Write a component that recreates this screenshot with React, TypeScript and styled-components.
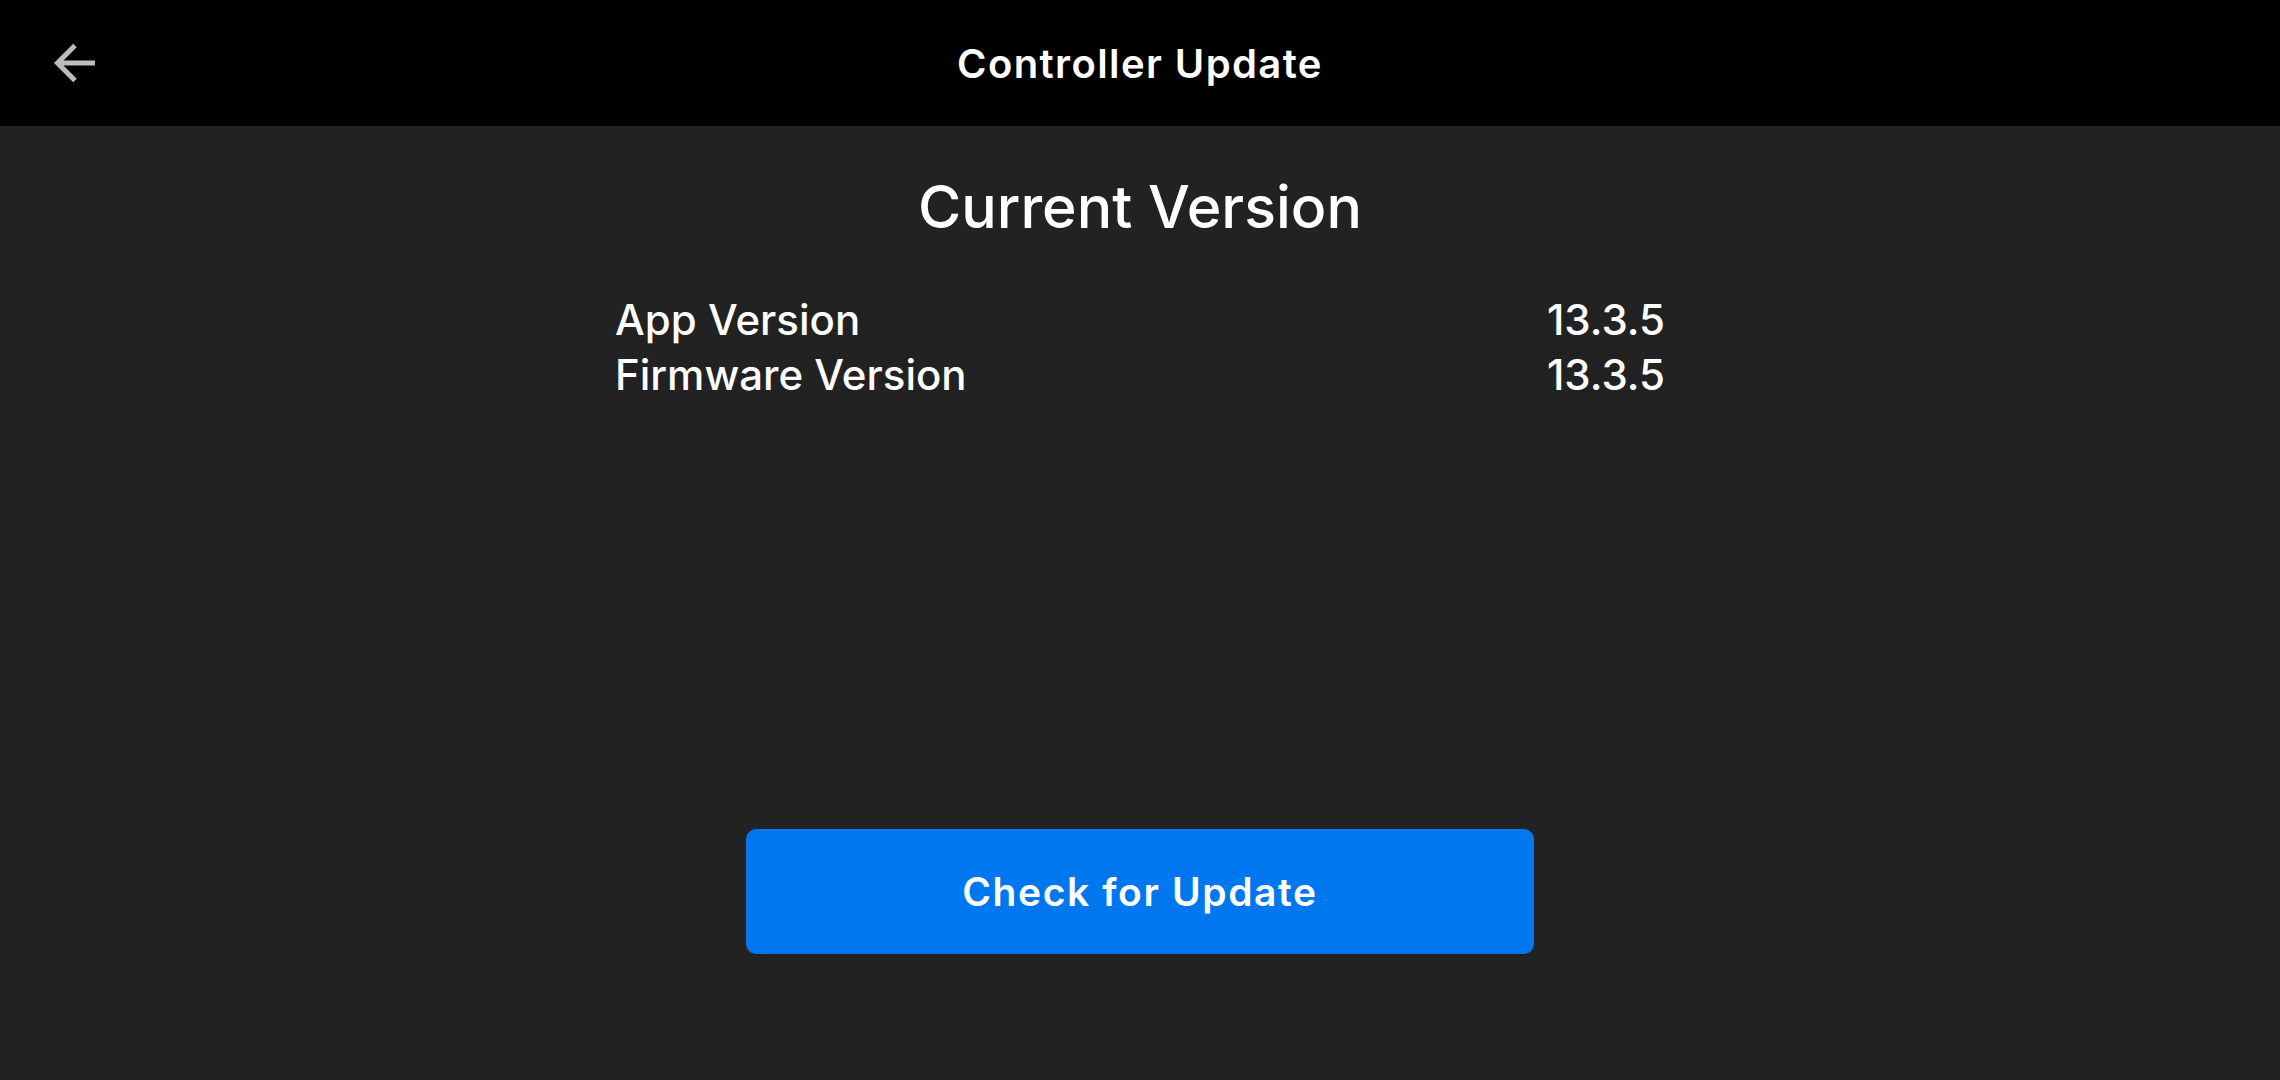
import React from "react";
import styled, { createGlobalStyle } from "styled-components";

const GlobalStyle = createGlobalStyle`
  html, body {
    margin: 0;
    padding: 0;
    background-color: #222222;
  }

  body {
    font-family: Inter, "Noto Sans", sans-serif;
    color: #ffffff;
  }
`;

const Screen = styled.div`
  display: flex;
  flex-flow: column nowrap;
  width: 100%;
  height: 100vh;
  background-color: #222222;
`;

const Header = styled.header`
  position: relative;
  display: flex;
  align-items: center;
  justify-content: center;
  height: 126px;
  flex-shrink: 0;
  background-color: #000000;
`;

const BackButton = styled.button`
  position: absolute;
  left: 44px;
  top: 50%;
  transform: translateY(-50%);
  display: flex;
  align-items: center;
  justify-content: center;
  width: 60px;
  height: 60px;
  padding: 0;
  border: none;
  background: none;
  cursor: pointer;
`;

const Title = styled.h1`
  margin: 0;
  font-size: 40px;
  font-weight: 600;
  letter-spacing: 1.4px;
`;

const Main = styled.main`
  display: flex;
  flex-flow: column nowrap;
  align-items: center;
  flex: 1;
  padding: 45px 0 126px;
`;

const Heading = styled.h2`
  margin: 0 0 49px;
  font-size: 59px;
  font-weight: 500;
  line-height: 72px;
`;

const VersionList = styled.dl`
  display: grid;
  grid-template-columns: 1fr auto;
  width: 1050px;
  margin: 0;
`;

const Label = styled.dt`
  font-size: 42px;
  font-weight: 500;
  line-height: 55px;
`;

const Value = styled.dd`
  margin: 0;
  font-size: 42px;
  font-weight: 500;
  line-height: 55px;
  text-align: right;
`;

const UpdateButton = styled.button`
  margin-top: auto;
  width: 788px;
  height: 125px;
  border: none;
  border-radius: 10px;
  background-color: #0077ee;
  color: #ffffff;
  font-family: inherit;
  font-size: 39px;
  font-weight: 600;
  letter-spacing: 1.6px;
  cursor: pointer;
`;

const versions = [
  { label: "App Version", value: "13.3.5" },
  { label: "Firmware Version", value: "13.3.5" },
];

export default function App() {
  return (
    <Screen>
      <GlobalStyle />
      <Header>
        <BackButton aria-label="Back">
          <svg width="42" height="42" viewBox="0 0 42 42" fill="none">
            <path
              d="M42 21H4.5M22 3.5L4.5 21L22 38.5"
              stroke="#bdbdbd"
              strokeWidth="5"
            />
          </svg>
        </BackButton>
        <Title>Controller Update</Title>
      </Header>
      <Main>
        <Heading>Current Version</Heading>
        <VersionList>
          {versions.map((v) => (
            <React.Fragment key={v.label}>
              <Label>{v.label}</Label>
              <Value>{v.value}</Value>
            </React.Fragment>
          ))}
        </VersionList>
        <UpdateButton type="button">Check for Update</UpdateButton>
      </Main>
    </Screen>
  );
}
